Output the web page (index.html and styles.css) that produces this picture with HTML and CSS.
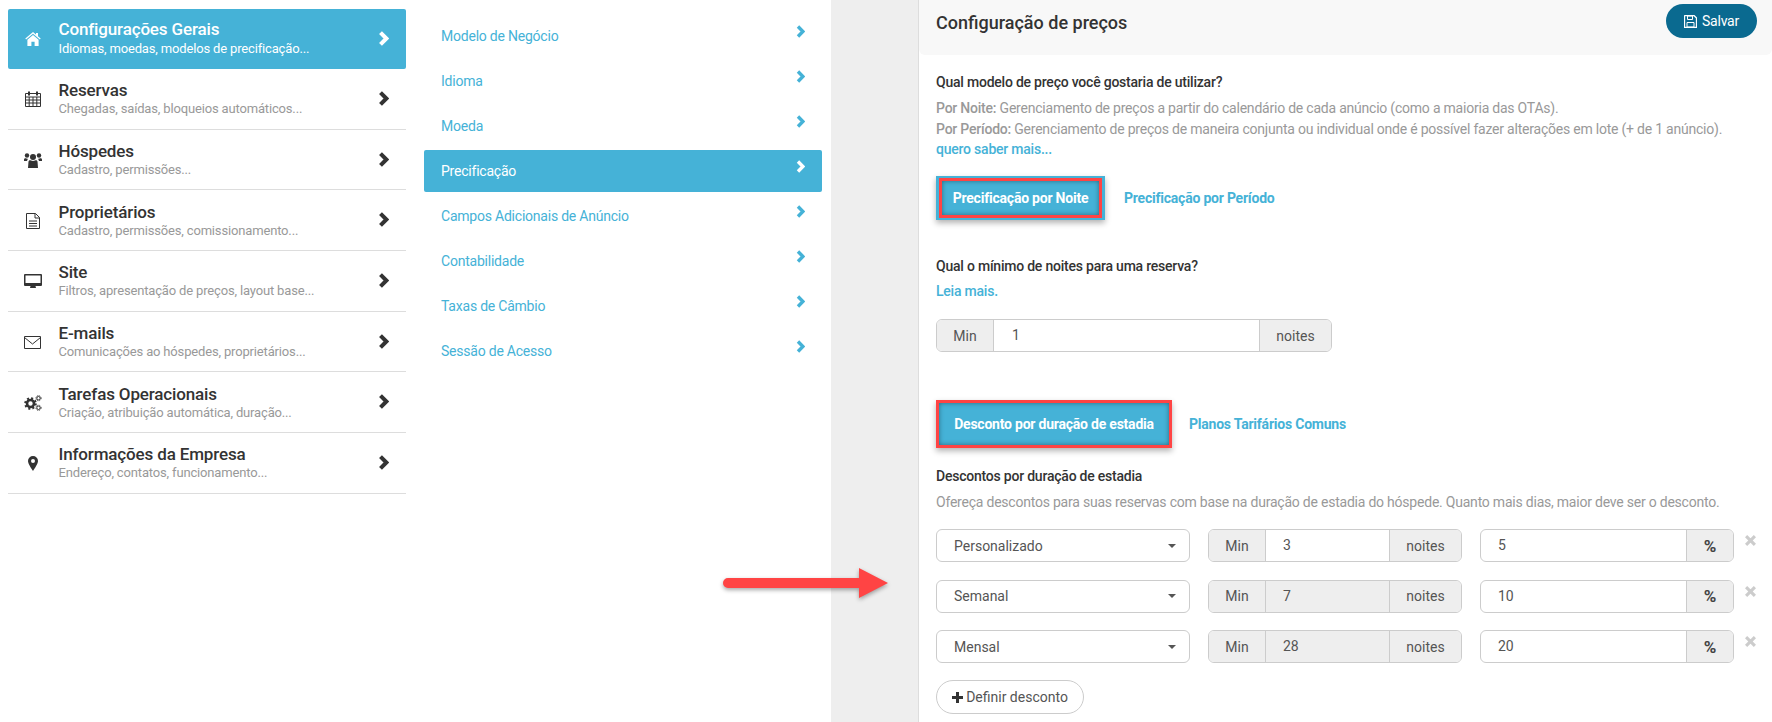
FILE: index.html
```html
<!DOCTYPE html>
<html lang="en">
<head>
  <meta charset="UTF-8" />
  <meta name="viewport" content="width=device-width, initial-scale=1" />
  <title>Configuração de preços</title>
  <link rel="stylesheet" href="styles.css">
</head>
<body>
  <svg class="defs" width="0" height="0">
    <symbol id="chev" viewBox="0 0 10 14"><path d="M2.200 1.500 7.700 7 2.200 12.500" fill="none" stroke="currentColor" stroke-width="3.800"/></symbol>
    <symbol id="close" viewBox="0 0 10 10"><path d="M1 1 9 9M9 1 1 9" fill="none" stroke="currentColor" stroke-width="2.800"/></symbol>
    <symbol id="caret" viewBox="0 0 8 4"><path d="M0 0H8L4 4Z" fill="currentColor"/></symbol>
  </svg>

  <!-- main menu -->
  <nav class="menu">
    <a class="menu-row active">
      <span class="menu-icon"><svg width="16" height="14" viewBox="0 0 16 14"><path d="M8 0 .3 6.6l.8 1L8 1.8l6.9 5.800.8-1-2.700-2.300V1h-2v1.600ZM8 3 2.400 7.700V14h4V9.800h3.200V14h4V7.700Z" fill="currentColor"/></svg></span>
      <span class="menu-text"><b>Configurações Gerais</b><small>Idiomas, moedas, modelos de precificação...</small></span>
      <svg class="chev" width="11" height="15"><use href="#chev"/></svg>
    </a>
    <a class="menu-row">
      <span class="menu-icon"><svg width="16" height="16" viewBox="0 0 16 16"><path d="M.5 2.500h15v13H.5ZM.5 6h15M.5 9h15M.5 12h15M4.200 6v9.500M8 6v9.500M11.800 6v9.500" fill="none" stroke="currentColor"/><path d="M3 .5h2v4H3ZM11 .5h2v4h-2Z" fill="currentColor"/></svg></span>
      <span class="menu-text"><b>Reservas</b><small>Chegadas, saídas, bloqueios automáticos...</small></span>
      <svg class="chev" width="11" height="15"><use href="#chev"/></svg>
    </a>
    <a class="menu-row">
      <span class="menu-icon"><svg width="18" height="16" viewBox="0 0 18 16"><g fill="currentColor"><circle cx="9" cy="5" r="3"/><circle cx="3" cy="3.500" r="2.200"/><circle cx="15" cy="3.500" r="2.200"/><path d="M4.500 9.500C5 8 6 8 7 8.500c1.200.6 2.800.6 4 0 1-.5 2-.5 2.500 1L14 16H4ZM0 7.500C.2 6 1.500 6 2.500 6.500c.6.3 1 .3 1.500.2-.3.8-.8 1.300-1 2.300H0ZM18 7.500C17.800 6 16.500 6 15.500 6.500c-.6.3-1 .3-1.500.2.300.8.800 1.300 1 2.300h3Z"/></g></svg></span>
      <span class="menu-text"><b>Hóspedes</b><small>Cadastro, permissões...</small></span>
      <svg class="chev" width="11" height="15"><use href="#chev"/></svg>
    </a>
    <a class="menu-row">
      <span class="menu-icon"><svg width="14" height="16" viewBox="0 0 14 16"><path d="M.5.5h9l4 4v11H.500ZM9 .5V5h4.500M3 8h8M3 10.500h8M3 13h8" fill="none" stroke="currentColor"/></svg></span>
      <span class="menu-text"><b>Proprietários</b><small>Cadastro, permissões, comissionamento...</small></span>
      <svg class="chev" width="11" height="15"><use href="#chev"/></svg>
    </a>
    <a class="menu-row">
      <span class="menu-icon"><svg width="18" height="16" viewBox="0 0 18 16"><path d="M1 1h16a1 1 0 0 1 1 1v10a1 1 0 0 1-1 1h-5.500l.5 2H6l.5-2H1a1 1 0 0 1-1-1V2a1 1 0 0 1 1-1Zm.500 1.500V10h15V2.500Z" fill="currentColor" fill-rule="evenodd"/></svg></span>
      <span class="menu-text"><b>Site</b><small>Filtros, apresentação de preços, layout base...</small></span>
      <svg class="chev" width="11" height="15"><use href="#chev"/></svg>
    </a>
    <a class="menu-row">
      <span class="menu-icon"><svg width="17" height="13" viewBox="0 0 17 13"><path d="M.5.5h16v12H.5ZM.5 1.500 8.500 8l8-6.500" fill="none" stroke="currentColor"/></svg></span>
      <span class="menu-text"><b>E-mails</b><small>Comunicações ao hóspedes, proprietários...</small></span>
      <svg class="chev" width="11" height="15"><use href="#chev"/></svg>
    </a>
    <a class="menu-row">
      <span class="menu-icon"><svg width="18" height="16" viewBox="0 0 18 16"><g fill="none" stroke="currentColor"><circle cx="6.500" cy="8.500" r="3.500" stroke-width="2.600"/><circle cx="6.500" cy="8.500" r="5.200" stroke-width="2.200" stroke-dasharray="2 2.080"/><circle cx="14.500" cy="3.200" r="1.700"/><circle cx="14.500" cy="3.200" r="2.600" stroke-dasharray="1.100 1.030"/><circle cx="14.500" cy="12.800" r="1.700"/><circle cx="14.500" cy="12.800" r="2.600" stroke-dasharray="1.100 1.030"/></g></svg></span>
      <span class="menu-text"><b>Tarefas Operacionais</b><small>Criação, atribuição automática, duração...</small></span>
      <svg class="chev" width="11" height="15"><use href="#chev"/></svg>
    </a>
    <a class="menu-row">
      <span class="menu-icon pin"><svg width="10" height="15" viewBox="0 0 10 15"><path d="M5 0a5 5 0 0 1 5 5c0 2.500-3 7-5 10C3 12 0 7.500 0 5a5 5 0 0 1 5-5Zm0 3a2 2 0 1 0 0 4 2 2 0 0 0 0-4Z" fill="currentColor" fill-rule="evenodd"/></svg></span>
      <span class="menu-text"><b>Informações da Empresa</b><small>Endereço, contatos, funcionamento...</small></span>
      <svg class="chev" width="11" height="15"><use href="#chev"/></svg>
    </a>
  </nav>

  <!-- sub menu -->
  <nav class="submenu">
    <a class="sub-row">Modelo de Negócio<svg class="sub-chev" width="9" height="13"><use href="#chev"/></svg></a>
    <a class="sub-row">Idioma<svg class="sub-chev" width="9" height="13"><use href="#chev"/></svg></a>
    <a class="sub-row">Moeda<svg class="sub-chev" width="9" height="13"><use href="#chev"/></svg></a>
    <a class="sub-row active">Precificação<svg class="sub-chev" width="9" height="13"><use href="#chev"/></svg></a>
    <a class="sub-row">Campos Adicionais de Anúncio<svg class="sub-chev" width="9" height="13"><use href="#chev"/></svg></a>
    <a class="sub-row">Contabilidade<svg class="sub-chev" width="9" height="13"><use href="#chev"/></svg></a>
    <a class="sub-row">Taxas de Câmbio<svg class="sub-chev" width="9" height="13"><use href="#chev"/></svg></a>
    <a class="sub-row">Sessão de Acesso<svg class="sub-chev" width="9" height="13"><use href="#chev"/></svg></a>
  </nav>

  <div class="gutter"></div>

  <main class="panel">
    <header class="panel-head">
      <h1>Configuração de preços</h1>
      <button class="save">
        <svg width="13" height="13" viewBox="0 0 13 13"><path d="M1 .5h9L12.500 3v9.500H.5V1Z" fill="none" stroke="currentColor" stroke-width="1.300"/><path d="M3.500 1h5v3.500h-5ZM3 7.500h7V12H3Z" fill="none" stroke="currentColor"/></svg>
        Salvar
      </button>
    </header>

    <section class="panel-body">
      <h4>Qual modelo de preço você gostaria de utilizar?</h4>
      <p class="desc">
        <strong>Por Noite:</strong> Gerenciamento de preços a partir do calendário de cada anúncio (como a maioria das OTAs).<br>
        <strong>Por Período:</strong> Gerenciamento de preços de maneira conjunta ou individual onde é possível fazer alterações em lote (+ de 1 anúncio).<br>
        <a class="link">quero saber mais...</a>
      </p>

      <div class="tabs tabs-price">
        <a class="tab on marked-in">Precificação por Noite</a>
        <a class="tab">Precificação por Período</a>
      </div>

      <h4 class="min-title">Qual o mínimo de noites para uma reserva?</h4>
      <a class="link read-more">Leia mais.</a>

      <div class="group group-wide">
        <span class="addon addon-min">Min</span>
        <span class="field">1</span>
        <span class="addon addon-unit">noites</span>
      </div>

      <div class="tabs tabs-discount">
        <a class="tab on marked-out">Desconto por duração de estadia</a>
        <a class="tab">Planos Tarifários Comuns</a>
      </div>

      <h4 class="disc-title">Descontos por duração de estadia</h4>
      <p class="desc disc-desc">Ofereça descontos para suas reservas com base na duração de estadia do hóspede. Quanto mais dias, maior deve ser o desconto.</p>

      <div class="disc-row">
        <div class="select">Personalizado<svg width="8" height="4"><use href="#caret"/></svg></div>
        <div class="group"><span class="addon addon-min">Min</span><span class="field">3</span><span class="addon addon-unit">noites</span></div>
        <div class="group"><span class="field">5</span><span class="addon addon-pct">%</span></div>
        <svg class="remove" width="11" height="11"><use href="#close"/></svg>
      </div>
      <div class="disc-row">
        <div class="select">Semanal<svg width="8" height="4"><use href="#caret"/></svg></div>
        <div class="group"><span class="addon addon-min">Min</span><span class="field off">7</span><span class="addon addon-unit">noites</span></div>
        <div class="group"><span class="field">10</span><span class="addon addon-pct">%</span></div>
        <svg class="remove" width="11" height="11"><use href="#close"/></svg>
      </div>
      <div class="disc-row">
        <div class="select">Mensal<svg width="8" height="4"><use href="#caret"/></svg></div>
        <div class="group"><span class="addon addon-min">Min</span><span class="field off">28</span><span class="addon addon-unit">noites</span></div>
        <div class="group"><span class="field">20</span><span class="addon addon-pct">%</span></div>
        <svg class="remove" width="11" height="11"><use href="#close"/></svg>
      </div>

      <button class="add">
        <svg width="11" height="11" viewBox="0 0 11 11"><path d="M4 0h3v4h4v3H7v4H4V7H0V4h4Z" fill="currentColor"/></svg>
        Definir desconto
      </button>
    </section>
  </main>

  <!-- annotation arrow drawn over the page -->
  <svg class="arrow" width="168" height="34" viewBox="0 0 168 34">
    <path d="M5 12H136V2L165 17 136 32V22H5a5 5 0 0 1 0-10Z" fill="#ff4444"/>
  </svg>
</body>
</html>
```

FILE: styles.css
```css
* {
  box-sizing: border-box;
}
html, body {
  margin: 0;
  height: 722px;
  overflow: hidden;
}
body {
  display: flex;
  position: relative;
  font-family: Roboto, "Liberation Sans", sans-serif;
  font-size: 14px;
  color: #333;
  background: #fff;
}
.defs {
  position: absolute;
}

/* main menu */
.menu {
  width: 398px;
  margin: 9px 0 0 8px;
  flex: none;
}
.menu-row {
  display: flex;
  align-items: center;
  height: 60.700px;
  padding-top: 1px;
  border-bottom: 1px solid #ddd;
  color: #333;
}
.menu-row.active {
  height: 60px;
  padding-top: 0;
  background: #45b2d7;
  border: 0;
  border-radius: 2px;
  color: #fff;
}
.menu-icon {
  width: 50.500px;
  flex: none;
  display: flex;
  justify-content: center;
  padding-right: 1px;
}
.menu-text {
  flex: 1;
  display: flex;
  flex-direction: column;
}
.menu-text b {
  margin: 1px 0 -1px;
  font-size: 17px;
  font-weight: 500;
  letter-spacing: -.15px;
  line-height: 20px;
}
.menu-row.active b {
  margin: 0;
}
.menu-text small {
  font-size: 13px;
  letter-spacing: -.16px;
  line-height: 20px;
  color: #999;
}
.menu-row.active small {
  color: #fff;
}
.chev {
  margin: 0 17px 2px 0;
  flex: none;
}

/* sub menu */
.submenu {
  width: 398px;
  margin: 15px 0 0 18px;
  flex: none;
}
.sub-row {
  display: flex;
  justify-content: space-between;
  height: 42px;
  margin-bottom: 3px;
  padding: 0 17px 0 17px;
  line-height: 42px;
  font-size: 14px;
  letter-spacing: -.22px;
  color: #45b2d7;
}
.sub-row.active {
  background: #45b2d7;
  border-radius: 2px;
  color: #fff;
}
.sub-chev {
  margin-top: 10px;
}

.gutter {
  width: 87px;
  margin-left: 9px;
  flex: none;
  background: #eee;
}

/* right panel */
.panel {
  flex: 1;
  border-left: 1px solid #ddd;
}
.panel-head {
  display: flex;
  justify-content: space-between;
  align-items: flex-start;
  height: 55px;
  padding: 4px 15px 0 17px;
  background: #f8f8f8;
  border-radius: 0 0 6px 6px;
}
.panel-head h1 {
  margin: 5px 0 0;
  font-size: 18px;
  font-weight: 500;
  line-height: 28px;
  color: #333;
}
.save {
  display: flex;
  align-items: center;
  justify-content: center;
  gap: 5px;
  width: 91px;
  height: 34px;
  border: 0;
  border-radius: 17px;
  background: #0a6a90;
  color: #fff;
  font: 14px Roboto, sans-serif;
  letter-spacing: -.2px;
}
.panel-body {
  padding: 17px 0 0 17px;
}
h4 {
  margin: 0;
  font-size: 14px;
  font-weight: 500;
  letter-spacing: -.22px;
  line-height: 20px;
  color: #333;
}
.desc {
  margin: 6px 0 0;
  font-size: 14px;
  letter-spacing: -.22px;
  line-height: 20.500px;
  color: #999;
}
.desc strong {
  font-weight: 500;
}
.link {
  display: block;
  font-size: 14px;
  font-weight: 500;
  letter-spacing: -.22px;
  color: #45b2d7;
}

/* tabs */
.tabs {
  display: flex;
  align-items: center;
}
.tabs-price {
  margin-top: 16.500px;
  gap: 19px;
}
.tabs-discount {
  margin-top: 48px;
  gap: 17px;
}
.tab {
  font-size: 14px;
  font-weight: 700;
  letter-spacing: -.22px;
  line-height: 20px;
  color: #45b2d7;
}
.tab.on {
  position: relative;
  display: flex;
  align-items: center;
  background: #45b2d7;
  color: #fff;
  box-shadow: 0 3px 6px rgba(0, 0, 0, .3);
}
.marked-in {
  width: 169px;
  height: 44px;
  justify-content: center;
}
.marked-in::after {
  content: "";
  position: absolute;
  inset: 2px 3px;
  border: 3px solid #ff4444;
  box-shadow: inset 0 0 5px rgba(0, 0, 0, .4);
}
.marked-out {
  width: 236px;
  height: 48px;
  justify-content: center;
  border: 3px solid #ff4444;
}
.marked-out::after {
  content: "";
  position: absolute;
  inset: 0;
  box-shadow: inset 0 0 5px rgba(0, 0, 0, .4);
}

.min-title {
  margin-top: 36px;
}
.read-more {
  margin-top: 5px;
  line-height: 20px;
}

/* input groups */
.group {
  display: flex;
  width: 254px;
  height: 33px;
  border: 1px solid #ccc;
  border-radius: 6px;
  overflow: hidden;
  color: #555;
}
.group-wide {
  width: 396px;
  margin-top: 18px;
}
.group-wide .field {
  padding-left: 18px;
}
.addon {
  flex: none;
  display: flex;
  align-items: center;
  justify-content: center;
  background: #eee;
}
.addon-min {
  width: 57px;
  border-right: 1px solid #ccc;
}
.addon-unit {
  width: 72px;
  border-left: 1px solid #ccc;
}
.addon-pct {
  width: 47px;
  border-left: 1px solid #ccc;
  font-weight: 700;
  font-size: 17px;
  color: #444;
}
.field {
  flex: 1;
  padding-left: 17px;
  line-height: 31px;
}
.field.off {
  background: #eee;
}

.disc-title {
  margin-top: 18px;
}
.disc-desc {
  margin-top: 6px;
  line-height: 20px;
}
.disc-row {
  display: flex;
  gap: 18px;
  margin-top: 17.500px;
}
.disc-desc + .disc-row {
  margin-top: 17px;
}
.select {
  display: flex;
  align-items: center;
  justify-content: space-between;
  width: 254px;
  height: 33px;
  padding: 0 13px 0 17px;
  border: 1px solid #ccc;
  border-radius: 6px;
  color: #555;
}
.remove {
  margin: 6px 0 0 -7px;
  color: #ccc;
}
.add {
  display: flex;
  align-items: center;
  justify-content: center;
  gap: 3px;
  width: 148px;
  height: 34px;
  margin-top: 17px;
  border: 1px solid #ccc;
  border-radius: 17px;
  background: #fff;
  color: #555;
  font: 14px Roboto, sans-serif;
}
.add svg {
  color: #333;
}

.arrow {
  position: absolute;
  left: 723px;
  top: 566px;
  filter: drop-shadow(0 2px 2px rgba(0, 0, 0, .35));
}
```
